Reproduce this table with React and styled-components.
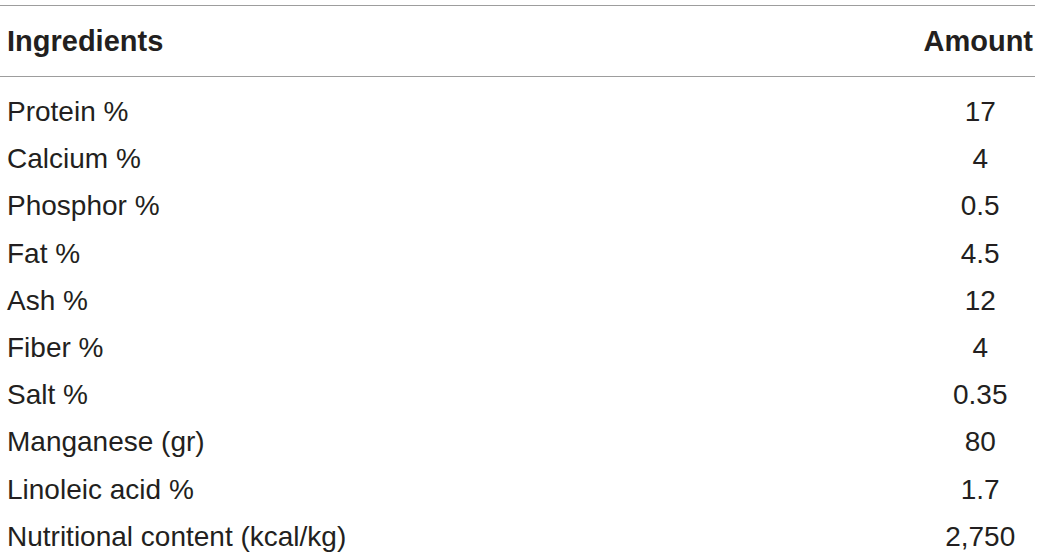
import React from "react";
import styled, { createGlobalStyle } from "styled-components";

const Global = createGlobalStyle`
  html, body { margin: 0; padding: 0; background: #fff; }
  body { font-family: "Liberation Sans", Arial, sans-serif; color: #231f20; }
`;

const Wrap = styled.div`
  padding: 5px 5px 0 0;
`;

const Table = styled.table`
  width: 1035px;
  border-collapse: collapse;
  font-size: 28px;
`;

const HeadCell = styled.th`
  height: 70px;
  padding: 0 ${(p) => (p.$num ? "2px" : "7px")};
  font-size: 29px;
  font-weight: bold;
  text-align: ${(p) => (p.$num ? "right" : "left")};
  border-top: 1.5px solid #9d9d9d;
  border-bottom: 1.5px solid #9d9d9d;
  vertical-align: middle;
`;

const Row = styled.tr`
  height: 47.2px;
`;

const Spacer = styled.tr`
  height: 12px;
`;

const Cell = styled.td`
  padding: ${(p) => (p.$num ? "0 0 0 4px" : "0 7px")};
  text-align: ${(p) => (p.$num ? "center" : "left")};
  vertical-align: middle;
  white-space: nowrap;
  line-height: 1;
`;

const NumCol = styled.col`
  width: 112px;
`;

const rows = [
  ["Protein %", "17"],
  ["Calcium %", "4"],
  ["Phosphor %", "0.5"],
  ["Fat %", "4.5"],
  ["Ash %", "12"],
  ["Fiber %", "4"],
  ["Salt %", "0.35"],
  ["Manganese (gr)", "80"],
  ["Linoleic acid %", "1.7"],
  ["Nutritional content (kcal/kg)", "2,750"],
];

export default function App() {
  return (
    <>
      <Global />
      <Wrap>
        <Table>
          <colgroup>
            <col />
            <NumCol />
          </colgroup>
          <thead>
            <tr>
              <HeadCell>Ingredients</HeadCell>
              <HeadCell $num>Amount</HeadCell>
            </tr>
          </thead>
          <tbody>
            <Spacer>
              <td />
              <td />
            </Spacer>
            {rows.map(([k, v]) => (
              <Row key={k}>
                <Cell>{k}</Cell>
                <Cell $num>{v}</Cell>
              </Row>
            ))}
          </tbody>
        </Table>
      </Wrap>
    </>
  );
}
